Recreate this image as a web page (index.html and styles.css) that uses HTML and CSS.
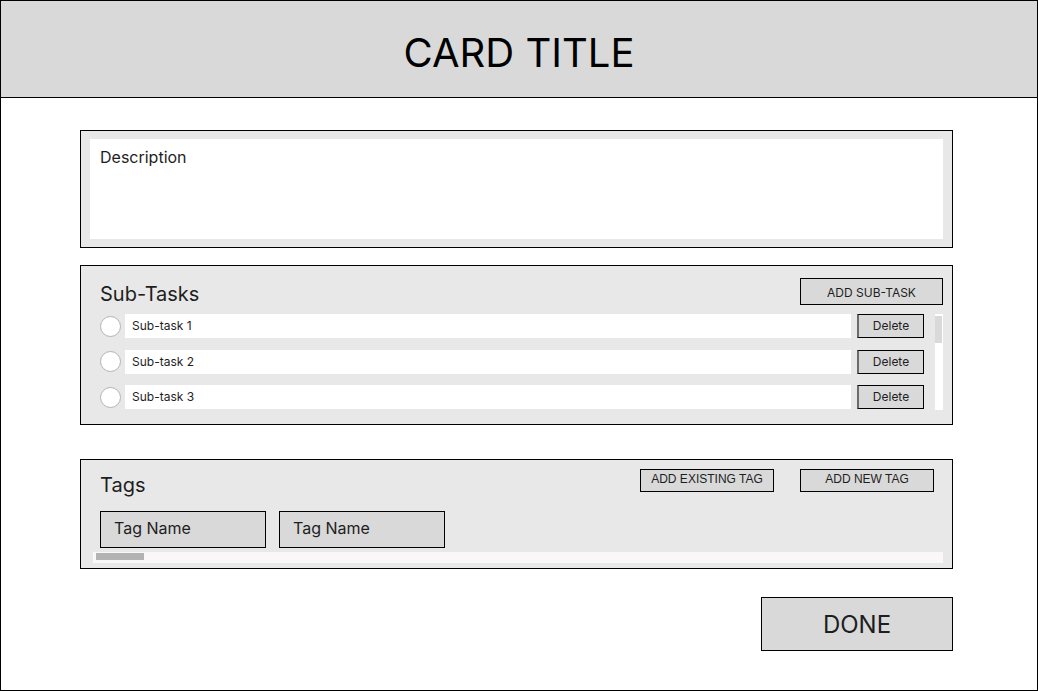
FILE: index.html
```html
<!DOCTYPE html>
<html lang="en">
<head>
<meta charset="utf-8">
<title>Card</title>
<link rel="stylesheet" href="styles.css">
</head>
<body>
<div class="frame">
  <header class="card-header">
    <h1 class="card-title">CARD TITLE</h1>
  </header>
  <main class="content">
    <section class="desc-box">
      <div class="desc-field">Description</div>
    </section>

    <section class="subtasks">
      <div class="subtasks-head">
        <h2 class="section-title sub-title">Sub-Tasks</h2>
        <button class="btn btn-add-sub">ADD SUB-TASK</button>
      </div>
      <div class="subtasks-body">
        <ul class="task-list">
          <li class="task-row">
            <span class="check"></span>
            <span class="task-input">Sub-task 1</span>
            <button class="btn btn-delete">Delete</button>
          </li>
          <li class="task-row">
            <span class="check"></span>
            <span class="task-input">Sub-task 2</span>
            <button class="btn btn-delete">Delete</button>
          </li>
          <li class="task-row">
            <span class="check"></span>
            <span class="task-input">Sub-task 3</span>
            <button class="btn btn-delete">Delete</button>
          </li>
        </ul>
        <div class="vscroll"><div class="vthumb"></div></div>
      </div>
    </section>

    <section class="tags">
      <div class="tags-head">
        <h2 class="section-title tags-title">Tags</h2>
        <div class="tag-actions">
          <button class="btn btn-tag">ADD EXISTING TAG</button>
          <button class="btn btn-tag">ADD NEW TAG</button>
        </div>
      </div>
      <div class="tag-list">
        <span class="tag">Tag Name</span>
        <span class="tag">Tag Name</span>
      </div>
      <div class="hscroll"><div class="hthumb"></div></div>
    </section>

    <div class="footer">
      <button class="btn btn-done">DONE</button>
    </div>
  </main>
</div>
</body>
</html>
```

FILE: styles.css
```css
* { box-sizing: border-box; }

html, body {
  margin: 0;
  padding: 0;
  background: #ffffff;
}

body {
  font-family: Inter, "Noto Sans", "Liberation Sans", sans-serif;
  color: #1e1e1e;
}

.frame {
  width: 1038px;
  height: 691px;
  border: 1px solid #000;
  display: flex;
  flex-direction: column;
}

.card-header {
  height: 97px;
  background: #d9d9d9;
  border-bottom: 1px solid #000;
  display: flex;
  align-items: center;
  justify-content: center;
  flex-shrink: 0;
}

.card-title {
  margin: 0;
  font-size: 40px;
  font-weight: 400;
  color: #000;
  line-height: 1;
  padding-top: 7px;
}

.content {
  padding: 32px 84px 0 79px;
  display: flex;
  flex-direction: column;
}

.btn {
  font-family: Inter, "Noto Sans", "Liberation Sans", sans-serif;
  background: #d9d9d9;
  border: 1px solid #000;
  color: #1e1e1e;
  padding: 0;
  margin: 0;
  cursor: pointer;
}

/* Description */
.desc-box {
  height: 118px;
  border: 1px solid #000;
  background: #e8e8e8;
  padding: 8px 9px;
}

.desc-field {
  height: 100%;
  background: #fff;
  padding: 9px 10px;
  font-size: 16px;
  line-height: 19px;
}

/* Sub-tasks */
.subtasks {
  margin-top: 17px;
  height: 160px;
  border: 1px solid #000;
  background: #e8e8e8;
  padding: 12px 9px 13px 19px;
}

.subtasks-head {
  height: 27px;
  display: flex;
  align-items: center;
  justify-content: space-between;
}

.section-title {
  margin: 0;
  font-size: 20px;
  font-weight: 400;
  line-height: 24px;
  color: #1e1e1e;
}

.sub-title {
  padding-top: 4px;
}

.btn-add-sub {
  width: 143px;
  height: 27px;
  font-size: 12px;
  padding-top: 1px;
}

.subtasks-body {
  margin-top: 9px;
  display: flex;
  gap: 11px;
}

.task-list {
  list-style: none;
  margin: 0;
  padding: 0;
  flex: 1;
  display: flex;
  flex-direction: column;
  gap: 11.5px;
}

.task-row {
  height: 24px;
  display: flex;
  align-items: center;
}

.check {
  width: 21px;
  height: 21px;
  border-radius: 50%;
  border: 1px solid #b3b3b3;
  background: #fff;
  flex-shrink: 0;
}

.task-input {
  margin-left: 4px;
  flex: 1;
  height: 24px;
  background: #fff;
  font-size: 12px;
  line-height: 24px;
  padding-left: 7px;
}

.btn-delete {
  margin-left: 6px;
  width: 67px;
  height: 24px;
  font-size: 12px;
  border-left-color: #6b6b6b;
  border-left-width: 2px;
  padding-bottom: 1px;
}

.vscroll {
  width: 8px;
  height: 96px;
  background: #fff;
  padding: 2px 1px 0 0;
}

.vthumb {
  height: 27px;
  background: #d9d9d9;
}

/* Tags */
.tags {
  margin-top: 34px;
  height: 110px;
  border: 1px solid #000;
  background: #e8e8e8;
  padding-top: 9px;
  display: flex;
  flex-direction: column;
}

.tags-head {
  height: 42px;
  display: flex;
  justify-content: space-between;
  padding: 0 18px 0 19px;
}

.tags-title {
  padding-top: 4px;
}

.tag-actions {
  display: flex;
  gap: 26px;
}

.btn-tag {
  width: 134px;
  height: 23px;
  font-family: "Liberation Sans", Arial, sans-serif;
  font-size: 12px;
  line-height: 14px;
  padding-bottom: 4px;
}

.tag-list {
  display: flex;
  gap: 13px;
  padding-left: 19px;
}

.tag {
  width: 166px;
  height: 37px;
  border: 1px solid #000;
  background: #d9d9d9;
  font-size: 16px;
  line-height: 33px;
  padding-left: 13px;
}

.hscroll {
  margin: 4px 9px 0 12px;
  height: 11px;
  background: #f9f7f7;
  padding: 1px 0 0 3px;
}

.hthumb {
  width: 48px;
  height: 7px;
  background: #b3b3b3;
}

/* Footer */
.footer {
  margin-top: 28px;
  display: flex;
  justify-content: flex-end;
}

.btn-done {
  width: 192px;
  height: 54px;
  font-size: 24px;
  color: #1e1e1e;
}
```
